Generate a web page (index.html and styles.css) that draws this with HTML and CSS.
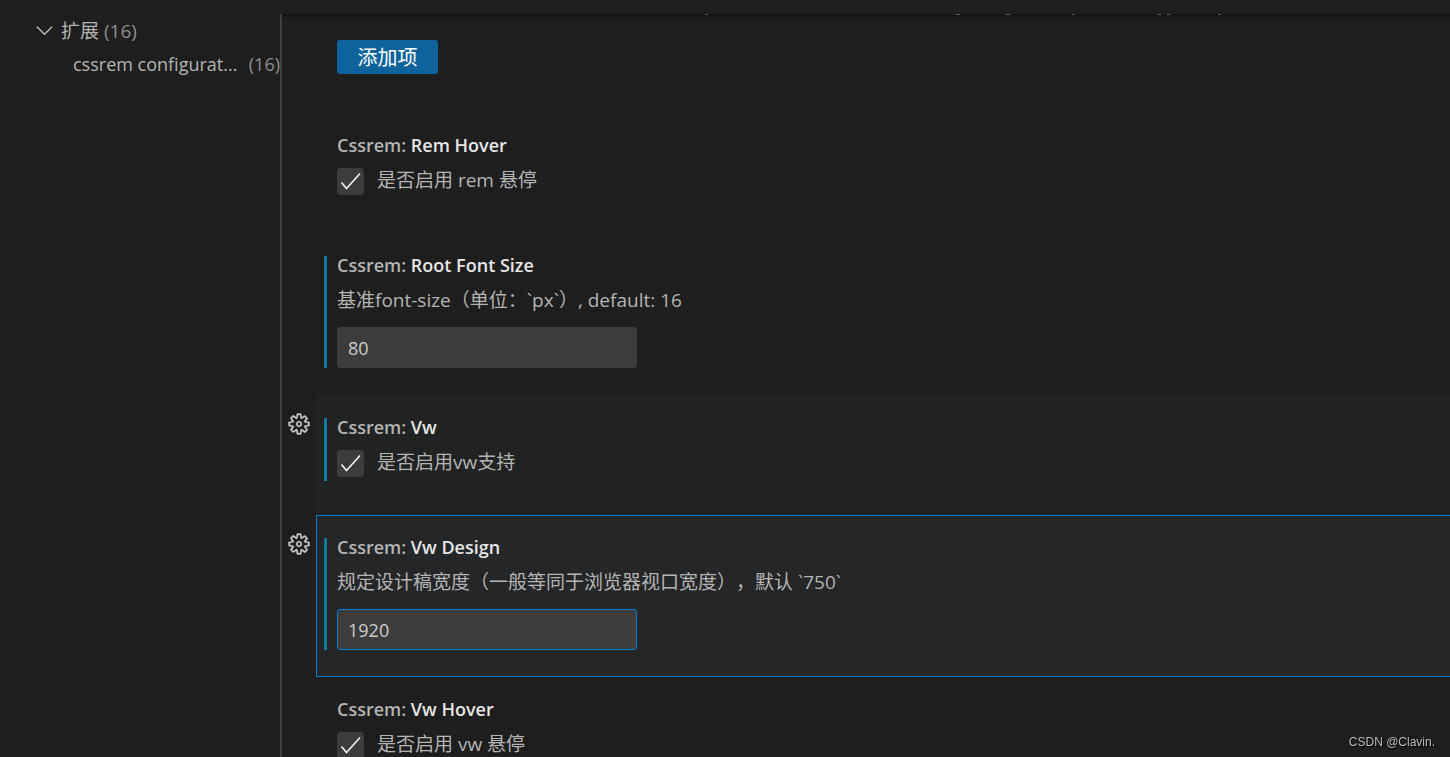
FILE: index.html
```html
<!DOCTYPE html>
<html lang="zh-CN">
<head>
	<meta charset="UTF-8">
	<title>Settings</title>
	<link rel="stylesheet" href="styles.css">
</head>
<body>
	<svg class="defs" aria-hidden="true">
		<symbol id="gear" viewBox="0 0 16 16">
			<path fill-rule="evenodd" d="M9.1 4.4L8.6 2H7.4l-.5 2.4-.7.3-2-1.3-.9.8 1.3 2-.2.7-2.4.5v1.2l2.4.5.3.8-1.3 2 .8.8 2-1.3.8.3.4 2.3h1.2l.5-2.4.8-.3 2 1.3.8-.8-1.3-2 .3-.8 2.3-.4V7.4l-2.4-.5-.3-.8 1.3-2-.8-.8-2 1.3-.7-.2zM9.4 1l.5 2.4L12 2.1l2 2-1.4 2.1 2.4.4v2.8l-2.4.5L14 12l-2 2-2.1-1.4-.5 2.4H6.6l-.5-2.4L4 13.9l-2-2 1.4-2.1L1 9.4V6.6l2.4-.5L2.1 4l2-2 2.1 1.4.4-2.4h2.8zm.6 7c0 1.1-.9 2-2 2s-2-.9-2-2 .9-2 2-2 2 .9 2 2zM8 9c.6 0 1-.4 1-1s-.4-1-1-1-1 .4-1 1 .4 1 1 1z"/>
		</symbol>
		<symbol id="tick" viewBox="0 0 27 27">
			<path d="M4.500 14.500l5 6L23 5.500"/>
		</symbol>
	</svg>

	<div class="settings">
		<nav class="toc">
			<a href="#extensions" class="toc-row">
				<svg class="chevron" viewBox="0 0 16 16"><path d="M.8 4.500l7.200 7 7.200-7"/></svg>
				<span class="toc-name">扩展</span>
				<span class="toc-count">(16)</span>
			</a>
			<a href="#cssrem" class="toc-row toc-child">
				<span class="toc-name">cssrem configurat...</span>
				<span class="toc-count">(16)</span>
			</a>
		</nav>

		<main class="list">
			<!-- bottom edge of the description scrolled under the header -->
			<svg class="scrolled" aria-hidden="true">
				<rect x="423" width="3" height="1"/>
				<rect x="674" width="4" height="1"/>
				<rect x="723" width="5" height="1"/>
				<rect x="790" width="3" height="1"/>
				<rect x="875" width="4" height="1"/>
				<rect x="885" width="3" height="1"/>
				<rect x="936" width="3" height="1"/>
			</svg>
			<div class="add-row">
				<button type="button" class="add">添加项</button>
			</div>

			<section class="item">
				<div class="gutter"></div>
				<div class="item-body check">
					<div class="inner">
						<h3>Cssrem: <b>Rem Hover</b></h3>
						<label class="check-row">
							<span class="box"><input type="checkbox" checked><svg><use href="#tick"/></svg></span>
							<span>是否启用 rem 悬停</span>
						</label>
					</div>
				</div>
			</section>

			<section class="item modified">
				<div class="gutter"></div>
				<div class="item-body">
					<div class="inner">
						<h3>Cssrem: <b>Root Font Size</b></h3>
						<label class="desc" for="root-font-size">基准font-size（单位：`px`）, default: 16</label>
						<input type="text" class="value" id="root-font-size" value="80">
					</div>
				</div>
			</section>

			<section class="item modified hovered">
				<div class="gutter"><button type="button" class="more" aria-label="More Actions"><svg><use href="#gear"/></svg></button></div>
				<div class="item-body check">
					<div class="inner">
						<h3>Cssrem: <b>Vw</b></h3>
						<label class="check-row">
							<span class="box"><input type="checkbox" checked><svg><use href="#tick"/></svg></span>
							<span>是否启用vw支持</span>
						</label>
					</div>
				</div>
			</section>

			<section class="item modified focused">
				<div class="gutter"><button type="button" class="more" aria-label="More Actions"><svg><use href="#gear"/></svg></button></div>
				<div class="item-body">
					<div class="inner">
						<h3>Cssrem: <b>Vw Design</b></h3>
						<label class="desc" for="vw-design">规定设计稿宽度（一般等同于浏览器视口宽度），默认 `750`</label>
						<input type="text" class="value" id="vw-design" value="1920">
					</div>
				</div>
			</section>

			<section class="item">
				<div class="gutter"></div>
				<div class="item-body check">
					<div class="inner">
						<h3>Cssrem: <b>Vw Hover</b></h3>
						<label class="check-row">
							<span class="box"><input type="checkbox" checked><svg><use href="#tick"/></svg></span>
							<span>是否启用 vw 悬停</span>
						</label>
					</div>
				</div>
			</section>
		</main>
	</div>

	<div class="watermark">CSDN @Clavin.</div>
</body>
</html>
```
FILE: styles.css
```css
* {
	box-sizing: border-box;
}

body {
	margin: 0;
	height: 100vh;
	overflow: hidden;
	background-color: #1e1e1e;
	color: #b4b4b4;
	font-family: "Open Sans", "Noto Sans CJK SC", sans-serif;
	font-size: 19px;
	line-height: 24px;
	text-spacing-trim: space-all;
}

.defs {
	display: none;
}

.settings {
	display: grid;
	grid-template-columns: 280px 1fr;
	height: 100%;
	padding-top: 14px;
}

/* table of contents */
.toc {
	min-width: 0;
}

.toc-row {
	display: flex;
	align-items: center;
	height: 33px;
	padding-left: 36px;
	color: #b4b4b4;
	text-decoration: none;
}

.toc-child {
	justify-content: space-between;
	padding-left: 73px;
	font-size: 18px;
}

.toc-name {
	white-space: nowrap;
}

.toc-count {
	margin-left: 5px;
	color: #8f8f8f;
}

.chevron {
	flex: none;
	width: 17px;
	height: 17px;
	margin-right: 8px;
	fill: none;
	stroke: #b4b4b4;
	stroke-width: 1.500;
}

/* settings list */
.list {
	min-width: 0;
	overflow: hidden;
	border-left: 2px solid #404040;
	background: linear-gradient(#121212, #1e1e1e 5px);
}

.scrolled {
	display: block;
	width: 100%;
	height: 1px;
	fill: #5c5c5c;
}

.add-row {
	padding: 25px 0 39px 55px;
}

.add {
	display: block;
	width: 101px;
	height: 34px;
	padding: 2px 0 0;
	border: none;
	border-radius: 3px;
	background-color: #0e639c;
	color: white;
	font-family: inherit;
	font-size: 20px;
	line-height: 32px;
}

.item {
	display: flex;
}

.gutter {
	flex: none;
	width: 34px;
	padding: 17px 0 0 5px;
}

.more {
	display: block;
	padding: 0;
	border: none;
	background: none;
}

.more svg {
	display: block;
	width: 24px;
	height: 24px;
	fill: #c5c5c5;
	stroke: #c5c5c5;
	stroke-width: 0.2;
}

.item-body {
	flex: 1;
	min-width: 0;
	padding: 22px 0 26px 7px;
	border: 1px solid transparent;
	border-right: none;
}

.item-body.check {
	padding-bottom: 33px;
}

.inner {
	padding-left: 10px;
	border-left: 3px solid transparent;
}

.modified .inner {
	border-color: #0c7d9d;
}

.hovered .item-body {
	background-color: #212322;
}

.focused .item-body {
	background-color: #252628;
	border-color: #007fd4;
}

h3 {
	margin: 0 0 14px;
	font-size: 18px;
	font-weight: 600;
	line-height: 18px;
}

h3 b {
	color: #e7e7e7;
	font-weight: 600;
}

.desc {
	display: block;
	margin-bottom: 15px;
}

.check-row {
	display: flex;
	gap: 13px;
	height: 31px;
}

.box {
	display: grid;
	width: 27px;
	height: 27px;
}

.box input,
.box svg {
	grid-area: 1 / 1;
	width: 27px;
	height: 27px;
	margin: 0;
}

.box input {
	appearance: none;
	border-radius: 4px;
	background-color: #3c3c3c;
}

.box svg {
	fill: none;
	stroke: #f0f0f0;
	stroke-width: 1.7;
	pointer-events: none;
}

.value {
	display: block;
	width: 300px;
	height: 41px;
	padding: 0 10px;
	border: 1px solid #3c3c3c;
	border-radius: 3px;
	background-color: #3c3c3c;
	color: #cccccc;
	font-family: inherit;
	font-size: 18px;
}

.focused .value {
	border-color: #007fd4;
}

.watermark {
	position: fixed;
	right: 15px;
	bottom: 8px;
	color: #bbb;
	font-family: "Liberation Sans", Arial, sans-serif;
	font-size: 12px;
	line-height: 14px;
	text-shadow: 1px 1px 1px #000;
}
```
